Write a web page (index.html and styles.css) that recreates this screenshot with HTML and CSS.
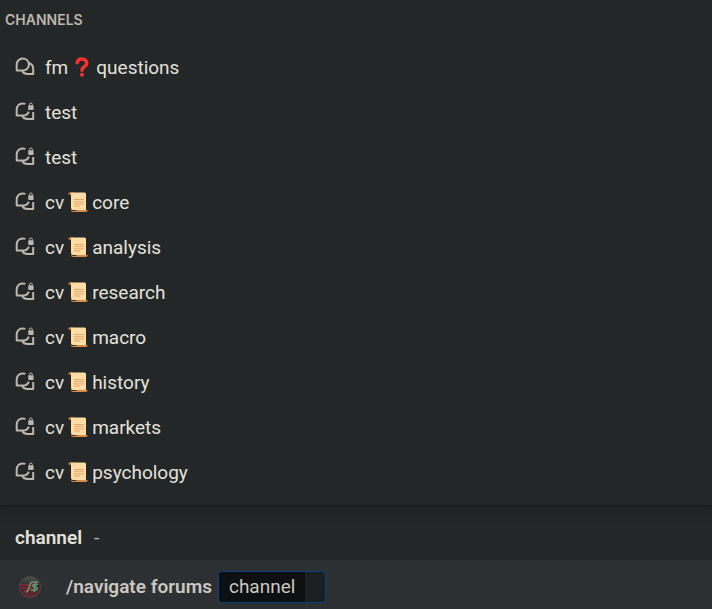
FILE: index.html
```html
<!DOCTYPE html>
<html lang="en">
<head>
<meta charset="utf-8">
<meta name="viewport" content="width=device-width, initial-scale=1">
<title>Channels</title>
<link rel="stylesheet" href="styles.css">
</head>
<body>
<svg class="defs" aria-hidden="true">
  <symbol id="forum" viewBox="0 0 20 20">
    <path d="M1.7 13.6V7.6A6.1 6.1 0 1 1 7.8 13.6ZM13.8 6C16.8 6.8 18.2 9 18.2 11.8V17H12.5C10.2 17 8.3 16.2 7.2 14"/>
  </symbol>
  <symbol id="forum-locked" viewBox="0 0 20 20">
    <path d="M10.4 1.9C5.4 .3 1.7 3.3 1.7 7.6V13.6H7.7C10.8 13.6 13 11.8 13.8 9.6M18.2 10V17H12.5C10.2 17 8.3 16.2 7.2 14"/>
    <rect class="solid" x="13.2" y="3.2" width="5.4" height="4.9" rx=".8"/>
    <path class="shackle" d="M14.5 3.6V2.4a1.4 1.4 0 0 1 2.8 0V3.6"/>
  </symbol>
  <symbol id="question" viewBox="0 0 20 20">
    <path d="M5.2 5.8C5.5 3.4 7.2 2 9.8 2C12.8 2 14.7 3.7 14.7 6.2C14.7 9.8 10 9.6 10 13.3" fill="none" stroke="#f8312f" stroke-width="3.5" stroke-linecap="round"/>
    <circle cx="10" cy="17.8" r="2" fill="#f8312f"/>
  </symbol>
  <symbol id="scroll" viewBox="0 0 20 20">
    <path d="M1 .5H6V3H2C.2 3-.3.8 1 .5Z" fill="#b86c32"/>
    <path d="M2 .5H16.5Q18 .5 18 2V18H5Q3 18 3 16V2.5Q3 .8 2 .5Z" fill="#ffdca5"/>
    <path d="M9 18H19.8Q19.7 20 17.5 20H5Q3 20 3 17.5Q4 19 6 19Q8.5 19 9 18Z" fill="#d98a43"/>
    <path d="M6 7.5H16M6 9.7H16M6 11.9H16M6 14H12" stroke="#dfa064" stroke-width=".9"/>
  </symbol>
</svg>
<main class="app">
  <section class="popup" aria-labelledby="heading">
    <h2 class="heading" id="heading">CHANNELS</h2>
    <ul class="list">
      <li><button class="row" type="button"><svg class="icon"><use href="#forum"/></svg><span>fm</span><svg class="emoji" role="img" aria-label="Question mark"><use href="#question"/></svg><span>questions</span></button></li>
      <li><button class="row" type="button"><svg class="icon"><use href="#forum-locked"/></svg><span>test</span></button></li>
      <li><button class="row" type="button"><svg class="icon"><use href="#forum-locked"/></svg><span>test</span></button></li>
      <li><button class="row" type="button"><svg class="icon"><use href="#forum-locked"/></svg><span>cv</span><svg class="emoji" role="img" aria-label="Scroll"><use href="#scroll"/></svg><span>core</span></button></li>
      <li><button class="row" type="button"><svg class="icon"><use href="#forum-locked"/></svg><span>cv</span><svg class="emoji" role="img" aria-label="Scroll"><use href="#scroll"/></svg><span>analysis</span></button></li>
      <li><button class="row" type="button"><svg class="icon"><use href="#forum-locked"/></svg><span>cv</span><svg class="emoji" role="img" aria-label="Scroll"><use href="#scroll"/></svg><span>research</span></button></li>
      <li><button class="row" type="button"><svg class="icon"><use href="#forum-locked"/></svg><span>cv</span><svg class="emoji" role="img" aria-label="Scroll"><use href="#scroll"/></svg><span>macro</span></button></li>
      <li><button class="row" type="button"><svg class="icon"><use href="#forum-locked"/></svg><span>cv</span><svg class="emoji" role="img" aria-label="Scroll"><use href="#scroll"/></svg><span>history</span></button></li>
      <li><button class="row" type="button"><svg class="icon"><use href="#forum-locked"/></svg><span>cv</span><svg class="emoji" role="img" aria-label="Scroll"><use href="#scroll"/></svg><span>markets</span></button></li>
      <li><button class="row" type="button"><svg class="icon"><use href="#forum-locked"/></svg><span>cv</span><svg class="emoji" role="img" aria-label="Scroll"><use href="#scroll"/></svg><span>psychology</span></button></li>
    </ul>
  </section>
  <div class="option"><strong>channel</strong><span class="dash">-</span></div>
  <form class="command">
    <svg class="avatar" viewBox="0 0 24 24" aria-hidden="true">
      <defs><linearGradient id="orb" x1="0" y1="0" x2="0" y2="1"><stop offset="0" stop-color="#3f594c"/><stop offset=".45" stop-color="#3a2727"/><stop offset="1" stop-color="#6b2630"/></linearGradient></defs>
      <circle cx="12" cy="12" r="10.5" fill="url(#orb)" stroke="#594344"/>
      <path d="M2 10H11M3 13H10M6 16L12 15L14 8H20" fill="none" stroke="#8c2935" stroke-width="1.6"/>
      <path d="M8 17C12 17 10 8 14 7H20M20 9.5H17C14 9.5 14 12 17 12C20 12 20 15 17 15H13M17.5 7.5L16 17" fill="none" stroke="#5b9870" stroke-width="1.6"/>
    </svg>
    <span class="name">/navigate forums</span>
    <span class="pill"><label for="channel">channel</label><input id="channel" type="text" autocomplete="off"></span>
  </form>
</main>
</body>
</html>
```
FILE: styles.css
```css
* {
  box-sizing: border-box;
}

body {
  margin: 0;
  min-height: 100vh;
  background: #232425;
  color: #e4e1dc;
  font: 19px/24px Roboto, sans-serif;
}

.defs {
  position: absolute;
  width: 0;
  height: 0;
}

.popup {
  padding-bottom: 11px;
  background: #232728;
  box-shadow: 0 1px 2px #17191a;
}

.heading {
  margin: 0;
  padding: 8px 5px 12px;
  color: #bdb6ad;
  font-family: Inter, sans-serif;
  font-size: 14px;
  font-weight: 600;
}

.list {
  margin: 0;
  padding: 0;
  list-style: none;
}

.row {
  display: flex;
  align-items: center;
  gap: 4px;
  width: 100%;
  height: 45px;
  padding: 0 15px;
  border: 0;
  background: none;
  color: inherit;
  font: inherit;
  text-align: left;
}

.row:hover {
  background: #2b2f31;
}

.row span {
  padding-top: 2px;
}

.icon {
  width: 20px;
  height: 20px;
  margin-right: 6px;
  fill: none;
  stroke: #bdb6ad;
  stroke-width: 2;
  stroke-linejoin: round;
}

.solid {
  fill: #bdb6ad;
  stroke: none;
}

.shackle {
  stroke-width: 1;
}

.emoji {
  width: 20px;
  height: 20px;
}

.option {
  display: flex;
  align-items: center;
  gap: 12px;
  height: 45px;
  margin-top: 10px;
  padding: 0 15px;
  background: linear-gradient(#232425, #232728 10px);
}

.option strong {
  font-weight: 600;
}

.dash {
  color: #bdb6ad;
}

.command {
  display: flex;
  align-items: center;
  min-height: 49px;
  padding: 5px 18px 0;
  background: #2d3033;
  color: #cbc7c1;
}

.avatar {
  width: 24px;
  height: 24px;
  margin-right: 24px;
}

.name {
  margin-right: 6px;
  font-weight: 600;
}

.pill {
  display: flex;
  height: 32px;
  overflow: hidden;
  border: 1px solid #063f86;
  border-radius: 4px;
  background: #1c1f20;
  line-height: 30px;
}

.pill label {
  padding: 0 10px;
  background: #0e0f10;
}

.pill input {
  width: 20px;
  padding: 0;
  border: 0;
  outline: 0;
  background: transparent;
  color: inherit;
  font: inherit;
}
```
